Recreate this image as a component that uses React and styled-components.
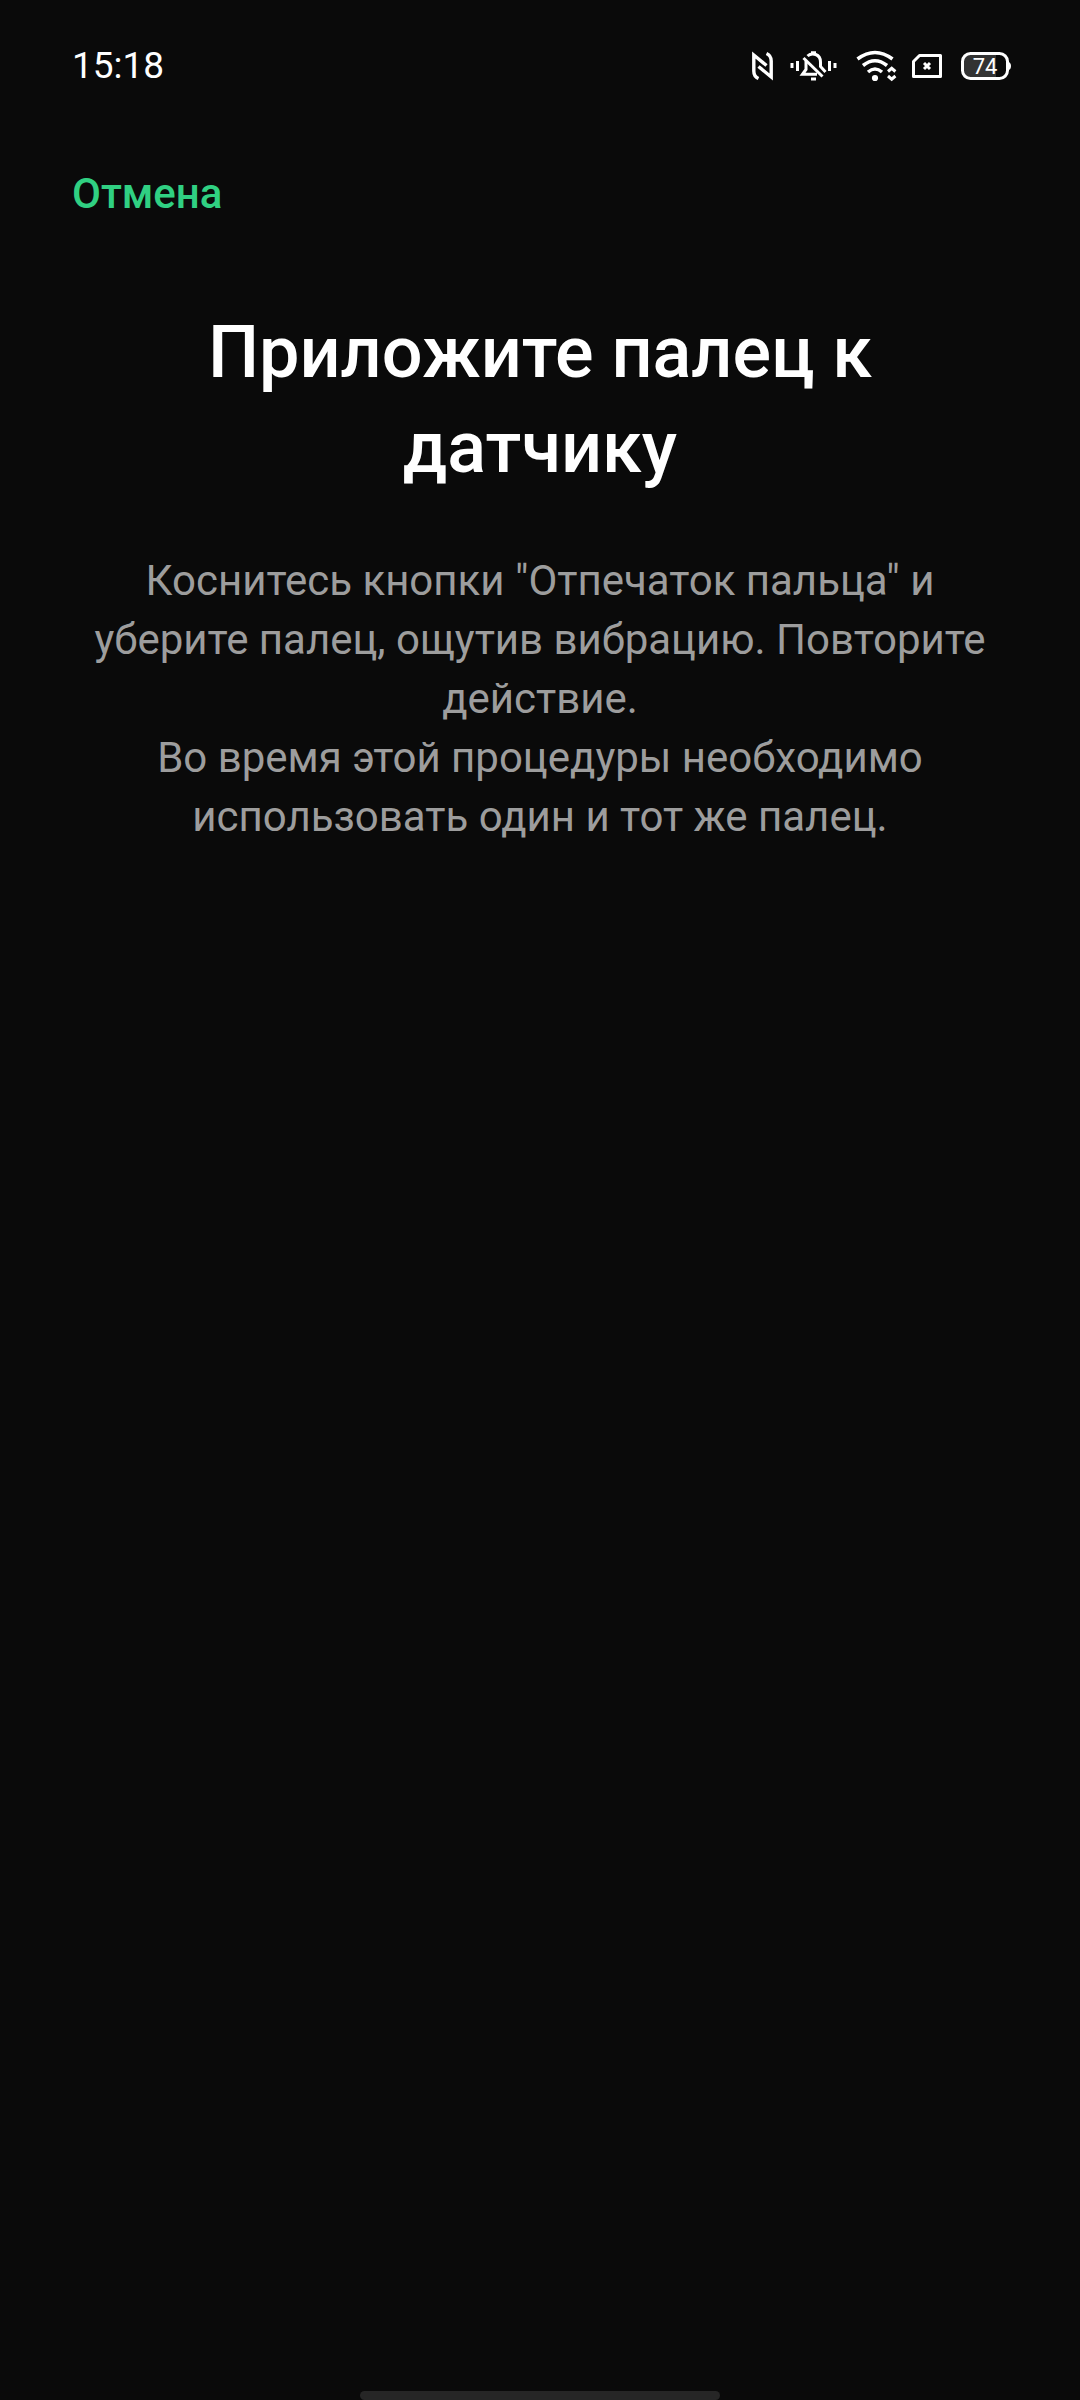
import React, { Component } from 'react'
import styled, { createGlobalStyle } from 'styled-components'

const GlobalStyle = createGlobalStyle`
    * {
        box-sizing: border-box;
    }
    body {
        margin: 0;
        background: #0a0a0a;
        font-family: Roboto, "Noto Sans", sans-serif;
    }
`

function NfcIcon() {
    return (
        <Icon width="24" height="32" viewBox="0 0 24 32" role="img" aria-label="NFC">
            <path d="M7.5 28.5C4 27 2.8 25 2.8 21V5L15.5 15.500" strokeWidth="3.4" />
            <path d="M15.5 3.5C19 5 20.2 7 20.2 11V27L7.5 16.5" strokeWidth="3.4" />
        </Icon>
    )
}

function SilentIcon() {
    return (
        <Icon width="52" height="32" viewBox="0 0 52 32" role="img" aria-label="Без звука">
            <path d="M3 13V18M8.5 11V21M40.5 11V21M46 13V18" />
            <path d="M14.5 8L33.5 26.5" />
            <path d="M17 11V19.5L13.5 24.3H28" />
            <path d="M18.5 6C23 2 31.5 4 31.5 12V16.5L36.5 22" />
            <path d="M22 2.8H27M22 29H27" />
        </Icon>
    )
}

function WifiIcon() {
    return (
        <Icon width="42" height="32" viewBox="0 0 42 32" role="img" aria-label="Wi-Fi">
            <path d="M2.5 9Q20 -4 37.5 9M8 15.5Q20 6 32 15.5M13 22Q20 16 27 22" strokeWidth="3.6" />
            <circle cx="20" cy="28" r="3.1" fill="#fff" stroke="none" />
            <path d="M33 21.5L36.7 18.3L40.4 21.5M33 26L36.7 29.2L40.4 26" />
        </Icon>
    )
}

function NoSimIcon() {
    return (
        <Icon width="36" height="32" viewBox="0 0 36 32" role="img" aria-label="Нет SIM-карты">
            <path d="M8.5 5.5H29.5V26.5H2.5V11.5Z" strokeLinejoin="round" />
            <path d="M13 13L19 19M19 13L13 19" />
        </Icon>
    )
}

function BatteryIcon({ level }) {
    return (
        <Icon width="50" height="32" viewBox="0 0 50 32" role="img" aria-label="Заряд">
            <path d="M9 3H35V29H9Q2 29 2 22V10Q2 3 9 3Z" fill="#333" stroke="none" />
            <rect x="1.5" y="3.5" width="45" height="25" rx="8" />
            <path d="M47 11.5Q50 12.5 50 16Q50 19.5 47 20.5Z" fill="#fff" stroke="none" />
            <Level x="24" y="24" textAnchor="middle">{level}</Level>
        </Icon>
    )
}

export default class App extends Component {
    render() {
        return (
            <Screen>
                <GlobalStyle />
                <StatusBar>
                    <Time>15:18</Time>
                    <StatusIcons>
                        <NfcIcon />
                        <SilentIcon />
                        <WifiIcon />
                        <NoSimIcon />
                        <BatteryIcon level={74} />
                    </StatusIcons>
                </StatusBar>

                <Toolbar>
                    <CancelButton type="button">Отмена</CancelButton>
                </Toolbar>

                <Content>
                    <Title>Приложите палец к датчику</Title>
                    <Text>
                        Коснитесь кнопки "Отпечаток пальца" и уберите палец, ощутив вибрацию. Повторите действие.
                    </Text>
                    <Text>
                        Во время этой процедуры необходимо использовать один и тот же палец.
                    </Text>
                </Content>

                <HomeBar />
            </Screen>
        )
    }
}

const Screen = styled.div`
    display: flex;
    flex-direction: column;
    min-height: 100vh;
    background: #0a0a0a;
    color: #fff;
`

const StatusBar = styled.header`
    display: flex;
    align-items: center;
    justify-content: space-between;
    height: 132px;
    padding: 0 69px 0 72px;
`

const Time = styled.time`
    font-size: 37px;
    line-height: 48px;
`

const StatusIcons = styled.div`
    display: flex;
    align-items: center;
    gap: 14px;
`

const Icon = styled.svg`
    display: block;
    fill: none;
    stroke: #fff;
    stroke-width: 3;
`

const Level = styled.text`
    font-size: 22px;
    fill: #fff;
    stroke: none;
`

const Toolbar = styled.nav`
    display: flex;
    padding: 32px 72px 0;
`

const CancelButton = styled.button`
    padding: 0;
    border: none;
    background: none;
    color: #30d082;
    font-family: inherit;
    font-size: 42px;
    font-weight: 500;
    line-height: 59px;
    cursor: pointer;
`

const Content = styled.main`
    flex: 1;
    padding: 82px 72px;
    text-align: center;
`

const Title = styled.h1`
    margin: 0 0 56px;
    font-size: 72px;
    font-weight: 500;
    line-height: 95px;
`

const Text = styled.p`
    margin: 0;
    color: #9d9d9d;
    font-size: 42px;
    line-height: 59px;
`

const HomeBar = styled.div`
    align-self: center;
    width: calc(100% / 3);
    height: 9px;
    border-radius: 5px;
    background: #262626;
`
